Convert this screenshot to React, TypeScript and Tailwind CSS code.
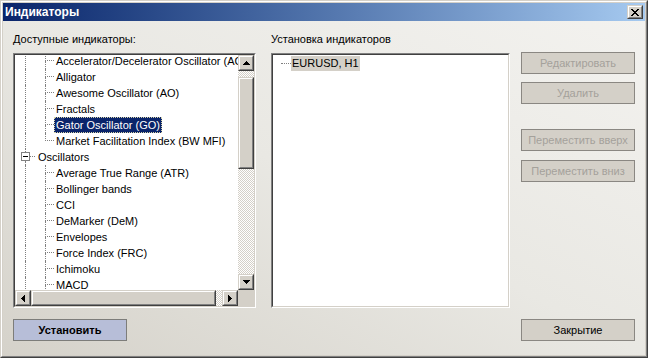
import React from 'react'

const dot = 'border-dotted border-[#808080]'

const firstGroup = [
  'Accelerator/Decelerator Oscillator (AC)',
  'Alligator',
  'Awesome Oscillator (AO)',
  'Fractals',
  'Gator Oscillator (GO)',
  'Market Facilitation Index (BW MFI)',
]

const oscillators = [
  'Average True Range (ATR)',
  'Bollinger bands',
  'CCI',
  'DeMarker (DeM)',
  'Envelopes',
  'Force Index (FRC)',
  'Ichimoku',
  'MACD',
]

// pixel-style arrows, like the classic scrollbar glyphs
const arrows = {
  up: { w: 7, h: 4, d: 'M3 0h1v1h-1z M2 1h3v1h-3z M1 2h5v1h-5z M0 3h7v1h-7z' },
  down: { w: 7, h: 4, d: 'M0 0h7v1h-7z M1 1h5v1h-5z M2 2h3v1h-3z M3 3h1v1h-1z' },
  left: { w: 4, h: 7, d: 'M3 0h1v7h-1z M2 1h1v5h-1z M1 2h1v3h-1z M0 3h1v1h-1z' },
  right: { w: 4, h: 7, d: 'M0 0h1v7h-1z M1 1h1v5h-1z M2 2h1v3h-1z M3 3h1v1h-1z' },
}

function Arrow({ dir }: { dir: keyof typeof arrows }) {
  const a = arrows[dir]
  return (
    <svg width={a.w} height={a.h} viewBox={`0 0 ${a.w} ${a.h}`} shapeRendering="crispEdges">
      <path d={a.d} fill="#000" />
    </svg>
  )
}

function Raised({ className, children }: { className?: string; children?: React.ReactNode }) {
  return (
    <div
      className={`border border-t-[#d4d0c8] border-l-[#d4d0c8] border-r-[#404040] border-b-[#404040] bg-[#d4d0c8] ${className ?? ''}`}
    >
      <div className="w-full h-full border border-t-white border-l-white border-r-[#808080] border-b-[#808080] flex items-center justify-center">
        {children}
      </div>
    </div>
  )
}

const checker =
  'bg-[image:repeating-conic-gradient(#d4d0c8_0%_25%,#ffffff_0%_50%)] bg-[length:2px_2px]'

function Sunken({ children }: { children?: React.ReactNode }) {
  return (
    <div className="h-[255px] border border-t-[#808080] border-l-[#808080] border-r-white border-b-white">
      <div className="w-full h-full border border-t-[#404040] border-l-[#404040] border-r-[#d4d0c8] border-b-[#d4d0c8] bg-white">
        {children}
      </div>
    </div>
  )
}

function Leaf({ label, last, selected }: { label: string; last?: boolean; selected?: boolean }) {
  return (
    <div className="flex h-4 shrink-0">
      <div className="w-5 shrink-0">
        <div className={`ml-[10px] h-full border-l ${dot}`} />
      </div>
      <div className="w-[19px] shrink-0 flex flex-col">
        <div className={`ml-[10px] h-2 border-l border-b ${dot}`} />
        {!last && <div className={`ml-[10px] h-2 border-l ${dot}`} />}
      </div>
      <span
        className={
          selected
            ? 'h-[16px] px-[1px] leading-[14px] whitespace-nowrap bg-[#0a246a] text-white border border-dotted border-[#d8d4a8]'
            : 'h-[16px] px-[1px] leading-[14px] whitespace-nowrap border border-transparent'
        }
      >
        {label}
      </span>
    </div>
  )
}

function CloseGlyph() {
  return (
    <svg width="8" height="7" viewBox="0 0 8 7" shapeRendering="crispEdges">
      <path
        d="M0 0h2v1h-2z M6 0h2v1h-2z M1 1h2v1h-2z M5 1h2v1h-2z M2 2h4v1h-4z M3 3h2v1h-2z M2 4h4v1h-4z M1 5h2v1h-2z M5 5h2v1h-2z M0 6h2v1h-2z M6 6h2v1h-2z"
        fill="#000"
      />
    </svg>
  )
}

const sideBtn =
  'h-[22px] border border-[#8a8782] bg-[#d4d0c8] flex items-center justify-center text-[#a4a19b]'

export default function App() {
  return (
    <div className="w-[648px] h-[358px] border border-t-[#d4d0c8] border-l-[#d4d0c8] border-r-[#404040] border-b-[#404040] font-['Liberation_Sans',sans-serif] text-[11px] text-black">
      <div className="w-full h-full border border-t-white border-l-white border-r-[#808080] border-b-[#808080] p-[1px] bg-[#d4d0c8] flex flex-col">
        {/* title bar */}
        <div className="h-[18px] shrink-0 flex items-center justify-between bg-linear-to-r from-[#0a246a] to-[#a6caf0] pl-[2px] pr-[2px]">
          <span className="text-white font-bold text-[12px] leading-[18px]">Индикаторы</span>
          <Raised className="w-4 h-[14px]">
            <CloseGlyph />
          </Raised>
        </div>

        {/* body */}
        <div className="flex-1 flex flex-col pt-[12px] px-[10px] bg-linear-to-tr from-[#d5d2ca] via-[#e9e8e3] to-[#f3f2ef]">
          <div className="flex">
            {/* available indicators */}
            <div className="w-[243px] shrink-0">
              <div className="h-[20px] leading-[13px]">Доступные индикаторы:</div>
              <Sunken>
                <div className="w-full h-full flex flex-col">
                  <div className="flex-1 flex min-h-0">
                    <div className="flex-1 overflow-hidden">
                      <div className="-mt-[2px] flex flex-col">
                        {firstGroup.map((item, i) => (
                          <Leaf
                            key={item}
                            label={item}
                            selected={i === 4}
                            last={i === firstGroup.length - 1}
                          />
                        ))}
                        {/* Oscillators node */}
                        <div className="flex h-4 shrink-0">
                          <div className="w-5 shrink-0 flex flex-col">
                            <div className={`ml-[10px] h-[3px] border-l ${dot}`} />
                            <div className="h-[9px] flex items-center">
                              <div className="ml-[6px] w-[9px] h-[9px] border border-[#808080] bg-white flex items-center justify-center">
                                <div className="w-[5px] h-px bg-black" />
                              </div>
                              <div className={`flex-1 border-t ${dot}`} />
                            </div>
                            <div className={`ml-[10px] h-[4px] border-l ${dot}`} />
                          </div>
                          <span className="h-[16px] pl-[2px] leading-[14px] whitespace-nowrap border border-transparent">
                            Oscillators
                          </span>
                        </div>
                        {oscillators.map((item) => (
                          <Leaf key={item} label={item} />
                        ))}
                      </div>
                    </div>
                    {/* vertical scrollbar */}
                    <div className="w-4 shrink-0 flex flex-col">
                      <Raised className="h-4 shrink-0">
                        <Arrow dir="up" />
                      </Raised>
                      <div className={`h-[6px] shrink-0 ${checker}`} />
                      <Raised className="h-[92px] shrink-0" />
                      <div className={`flex-1 ${checker}`} />
                      <Raised className="h-4 shrink-0">
                        <Arrow dir="down" />
                      </Raised>
                    </div>
                  </div>
                  {/* horizontal scrollbar */}
                  <div className="h-4 shrink-0 flex">
                    <Raised className="w-4 shrink-0">
                      <Arrow dir="left" />
                    </Raised>
                    <Raised className="w-[185px] shrink-0" />
                    <div className={`flex-1 ${checker}`} />
                    <Raised className="w-4 shrink-0">
                      <Arrow dir="right" />
                    </Raised>
                    <div className="w-4 shrink-0 bg-[#d4d0c8]" />
                  </div>
                </div>
              </Sunken>
            </div>

            {/* installed indicators */}
            <div className="w-[239px] shrink-0 ml-[15px]">
              <div className="h-[20px] leading-[13px]">Установка индикаторов</div>
              <Sunken>
                <div className="flex h-4 items-center pl-[8px]">
                  <div className={`w-[10px] border-t ${dot}`} />
                  <span className="h-[15px] px-[1px] leading-[15px] bg-[#d4d0c8] whitespace-nowrap">
                    EURUSD, H1
                  </span>
                </div>
              </Sunken>
            </div>

            {/* side buttons */}
            <div className="w-[114px] shrink-0 ml-[11px] pt-[19px] flex flex-col">
              <div className={sideBtn}>Редактировать</div>
              <div className={`mt-[8px] ${sideBtn}`}>Удалить</div>
              <div className={`mt-[25px] ${sideBtn}`}>Переместить вверх</div>
              <div className={`mt-[9px] ${sideBtn}`}>Переместить вниз</div>
            </div>
          </div>

          {/* bottom buttons */}
          <div className="mt-[11px] flex justify-between">
            <div className="w-[114px] h-[22px] border border-[#7d7d7a] bg-[#b7bed8] flex items-center justify-center font-bold">
              Установить
            </div>
            <div className="w-[114px] h-[22px] border border-[#8a8782] bg-[#d4d0c8] flex items-center justify-center">
              Закрытие
            </div>
          </div>
        </div>
      </div>
    </div>
  )
}
